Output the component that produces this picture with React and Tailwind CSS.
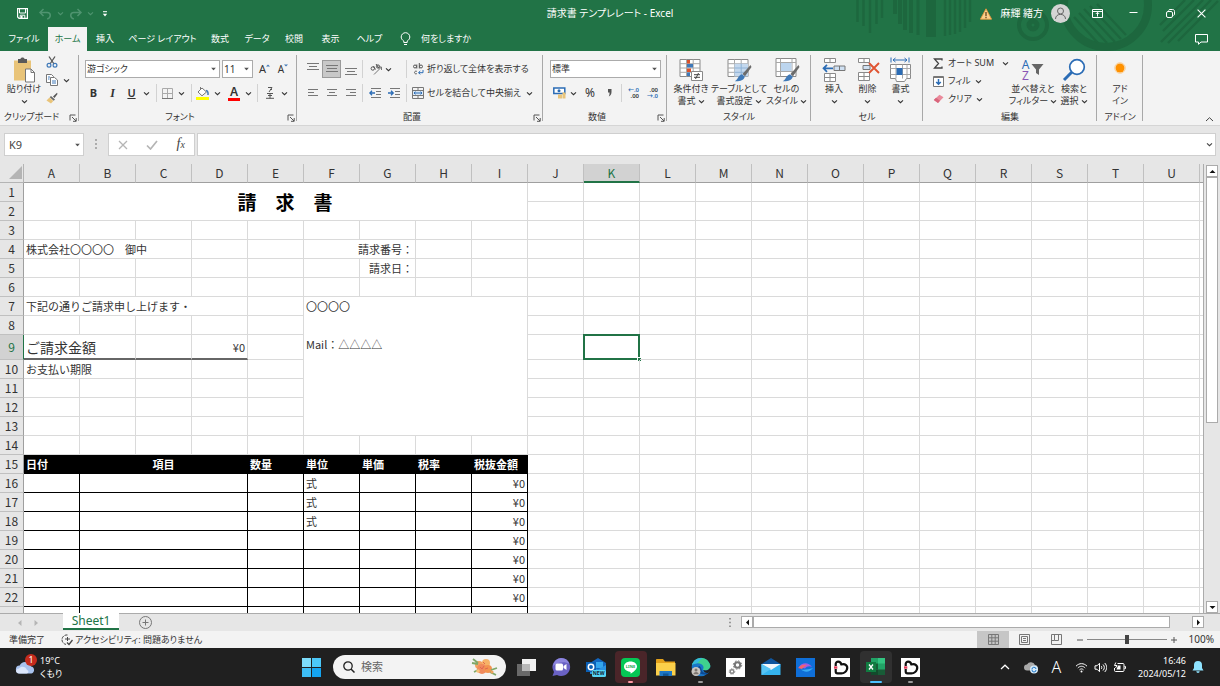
import React from "react";

/* ---------- shared pieces ---------- */

const uiFont = "font-['Noto_Sans','Noto_Sans_CJK_JP',sans-serif] [font-feature-settings:'palt']";
const sheetFont = "font-['Noto_Sans_CJK_JP',sans-serif] [font-feature-settings:normal]";

function Svg({ w, h, children, className = "", box }) {
  return (
    <svg
      width={w}
      height={h}
      viewBox={box || `0 0 ${w} ${h}`}
      fill="none"
      className={`shrink-0 ${className}`}
      aria-hidden="true"
    >
      {children}
    </svg>
  );
}

function Chevron({ className = "" }) {
  return (
    <Svg w={7} h={7} className={className}>
      <path d="M1 2.3l2.5 2.4L6 2.3" stroke="currentColor" strokeWidth="1.1" />
    </Svg>
  );
}

function Caret() {
  return (
    <Svg w={5} h={3} className="pointer-events-none absolute top-1/2 right-1 -translate-y-1/2">
      <path d="M0 0h5L2.5 3z" fill="#555" />
    </Svg>
  );
}

function Tool({ label, w, active, children }) {
  return (
    <button
      type="button"
      aria-label={label}
      title={label}
      className={`flex h-[18px] shrink-0 items-center justify-center ${w} ${
        active ? "border border-[#9a9a9a] bg-[#c8c8c8]" : ""
      }`}
    >
      {children}
    </button>
  );
}

function More({ label, w }) {
  return (
    <Tool label={label} w={w}>
      <Chevron />
    </Tool>
  );
}

function Rule({ w }) {
  return (
    <span className={`flex h-[18px] shrink-0 justify-center ${w}`}>
      <span className="w-px bg-[#d2d2d2]" />
    </span>
  );
}

function Launcher() {
  return (
    <button type="button" aria-label="詳細設定" className="absolute right-[2px] bottom-[3px]">
      <Svg w={8} h={8}>
        <path d="M1 6.5V1h5.5M3 3l4 4M7.2 4v3.3H4" stroke="#555" />
      </Svg>
    </button>
  );
}

function Group({ title, w, launcher, children }) {
  return (
    <section
      aria-label={title}
      className={`relative flex h-full shrink-0 flex-col ${w} after:absolute after:top-1 after:right-0 after:bottom-1 after:w-px after:bg-[#a8a8a8]`}
    >
      <div className="flex-1">{children}</div>
      <div className={`h-4 text-center leading-4 ${launcher ? "pr-4" : ""}`}>{title}</div>
      {launcher && <Launcher />}
    </section>
  );
}

function BigButton({ icon, lines, more, w }) {
  return (
    <button type="button" className={`flex shrink-0 flex-col items-center pt-[5px] ${w}`}>
      <span className="flex h-[27px] items-center">{icon}</span>
      {lines.map((line, i) => (
        <span key={line} className="flex h-3 items-center gap-0.5 leading-3 whitespace-nowrap">
          {line}
          {more === "inline" && i === lines.length - 1 && <Chevron />}
        </span>
      ))}
      {more === "below" && (
        <span className="flex h-3 items-center">
          <Chevron />
        </span>
      )}
    </button>
  );
}

function Lines({ rows }) {
  return (
    <Svg w={12} h={12}>
      {rows.map(([x, y, len]) => (
        <path key={y} d={`M${x} ${y}h${len}`} stroke="#777" />
      ))}
    </Svg>
  );
}

/* ---------- title bar and tabs ---------- */

function HeaderArt() {
  return (
    <svg
      viewBox="0 0 366 51"
      className="pointer-events-none absolute top-0 right-0 h-full w-[366px]"
      fill="none"
      stroke="#1d673e"
      aria-hidden="true"
    >
      <g strokeWidth="2.4">
        <path d="M3.500 0v22M9.500 0v26M16 0v33M22.500 0v24M28 0v18" />
        <path d="M41 0v14M46 0v24M51 0v30M57 0v33" strokeWidth="4" />
        <path d="M64 0v35" strokeWidth="3" />
        <path d="M77 0v37" strokeWidth="10" />
        <path d="M91 0v36M96 0v35M101 0v34M106 0v32M111 0v28M116 0v22" />
      </g>
      <circle cx="179" cy="25" r="4" strokeWidth="5" />
      <circle cx="179" cy="25" r="14" strokeWidth="4" />
      <circle cx="252" cy="5" r="42" strokeWidth="8" />
      <g strokeWidth="2.4">
        <path d="M220 17l24 26M225 13l28 30M230 9l31 33M236 6l31 33M243 4l29 31" />
        <path d="M307 42L349 0M314 43L357 0M324 41L364 1M306 25L331 0M309 31L340 0" />
      </g>
    </svg>
  );
}

function TitleBar() {
  return (
    <div className="relative flex h-[27px] items-center text-white">
      <div className="flex flex-1 items-center">
        <button type="button" aria-label="上書き保存" className="ml-4 flex w-3 justify-center">
          <Svg w={11} h={11}>
            <path d="M.6.6h9.8v9.8H2L.6 9z" stroke="#fff" strokeWidth="1.2" />
            <path d="M2.5 1v4h6V1M3.2 10V7.2h4.6V10" stroke="#fff" />
            <path d="M4 8h1.6v2H4z" fill="#fff" />
          </Svg>
        </button>
        <button type="button" aria-label="元に戻す" className="ml-2.5 flex items-center gap-1 text-[#4f9470]">
          <Svg w={15} h={12}>
            <path d="M5.5 1L2 4.4 5.5 8M2 4.4h7.2c4 0 4.2 5.4 0 6.6" stroke="currentColor" strokeWidth="1.5" />
          </Svg>
          <Chevron />
        </button>
        <button type="button" aria-label="やり直し" className="ml-1 flex items-center gap-1 text-[#4f9470]">
          <Svg w={15} h={12}>
            <path d="M9.5 1L13 4.4 9.5 8M13 4.4H5.8c-4 0-4.2 5.4 0 6.6" stroke="currentColor" strokeWidth="1.5" />
          </Svg>
          <Chevron />
        </button>
        <button type="button" aria-label="クイック アクセス ツール バーのユーザー設定" className="ml-2 flex">
          <Svg w={6} h={6}>
            <path d="M1 .7h4" stroke="#fff" />
            <path d="M.8 2.8h4.4L3 5.4z" fill="#fff" />
          </Svg>
        </button>
      </div>
      <h1 className="text-[10px] whitespace-pre">請求書 テンプレレート - Excel</h1>
      <div className="flex flex-1 items-center justify-end">
        <Svg w={12} h={12}>
          <path d="M6 .8L11.6 11.2H.4z" fill="#fbd08c" stroke="#e8963c" strokeWidth=".9" />
          <path d="M6 4v4M6 8.8v1.4" stroke="#5d3a12" strokeWidth="1.2" />
        </Svg>
        <span className="ml-2 text-[10px]">麻輝 緒方</span>
        <button type="button" aria-label="アカウント" className="ml-2 flex">
          <Svg w={19} h={19}>
            <circle cx="9.5" cy="9.5" r="9.5" fill="#d4d4d4" />
            <circle cx="9.5" cy="7" r="3" stroke="#666" />
            <path d="M4.5 15c0-6.200 10-6.200 10 0" stroke="#666" />
          </Svg>
        </button>
        <button type="button" aria-label="リボンの表示オプション" className="flex w-[54px] justify-center">
          <Svg w={11} h={9}>
            <path d="M.5.5h10v8H.5zM.5 2.500h10M5.500 7.500v-4M3.800 5l1.700-1.700L7.200 5" stroke="#fff" />
          </Svg>
        </button>
        <button type="button" aria-label="最小化" className="flex w-[19px] justify-center">
          <Svg w={9} h={9}>
            <path d="M.5 3.500h8" stroke="#fff" />
          </Svg>
        </button>
        <button type="button" aria-label="元に戻す (縮小)" className="flex w-[54px] justify-center">
          <Svg w={9} h={9}>
            <rect x=".5" y="2.500" width="6" height="6" rx="1.500" stroke="#fff" />
            <path d="M2.500 1.500c.3-.7.800-1 1.500-1h2.500c1.300 0 2 .7 2 2V5c0 .7-.3 1.200-1 1.500" stroke="#fff" />
          </Svg>
        </button>
        <button type="button" aria-label="閉じる" className="mr-3.5 flex w-[9px] justify-center">
          <Svg w={9} h={9}>
            <path d="M.6.6l7.800 7.800M8.400.6L.6 8.400" stroke="#fff" strokeWidth="1.100" />
          </Svg>
        </button>
      </div>
    </div>
  );
}

const tabs = [
  ["ファイル", "w-12"],
  ["ホーム", "w-[39px]"],
  ["挿入", "w-9"],
  ["ページ レイアウト", "w-[79px]"],
  ["数式", "w-9"],
  ["データ", "w-[38px]"],
  ["校閲", "w-9"],
  ["表示", "w-[37px]"],
  ["ヘルプ", "w-[41px]"],
];

function Tabs() {
  return (
    <nav aria-label="リボン タブ" className="relative flex h-6 items-stretch text-[9px] text-white">
      {tabs.map(([name, w]) => (
        <button
          key={name}
          type="button"
          className={`shrink-0 whitespace-nowrap ${w} ${name === "ホーム" ? "bg-[#f3f3f3] text-[#217346]" : ""}`}
        >
          {name}
        </button>
      ))}
      <button type="button" className="ml-2.5 flex items-center gap-2.5">
        <Svg w={11} h={14}>
          <path
            d="M3.800 10.500V9C2.200 8 1.200 6.700 1.200 5a4.300 4.300 0 018.600 0c0 1.700-1 3-2.600 4v1.500zM4 12.500h3"
            stroke="#fff"
          />
        </Svg>
        何をしますか
      </button>
      <button type="button" aria-label="コメント" className="mr-3 ml-auto flex items-center">
        <Svg w={13} h={11}>
          <path d="M.5.5h12v7.500H6L3.500 10.300V8h-3z" stroke="#fff" />
        </Svg>
      </button>
    </nav>
  );
}

/* ---------- ribbon ---------- */

function GridIcon({ children }) {
  return (
    <Svg w={26} h={26}>
      <path d="M2 2.500h20v17H2z" fill="#fff" stroke="#8a8a8a" />
      <path d="M2 6.700h20M2 11h20M2 15.300h20M8.500 2.500v17M15.200 2.500v17" stroke="#a8a8a8" />
      {children}
    </Svg>
  );
}

function Brush() {
  return (
    <>
      <path d="M24.500 8L16.500 17l2.500 2.200L25.500 10z" fill="#6b6b6b" />
      <path d="M16 17.300l2.800 2.500c-1.300 4-5 4.700-10 4.500 3-1.300 3.400-6.300 7.200-7z" fill="#3f79b8" />
    </>
  );
}

function ClipboardGroup() {
  return (
    <Group title="クリップボード" w="w-[79px]" launcher>
      <div className="flex">
        <BigButton
          w="ml-1 w-10"
          lines={["貼り付け"]}
          more="below"
          icon={
            <Svg w={24} h={26}>
              <path d="M2 3.500h17v20H2z" fill="#e9c479" />
              <path d="M6 2h2.500c0-2 4-2 4 0H15v4H6z" fill="#595959" />
              <path d="M13.500 12h5.500l3.500 3.500v9.500h-9z" fill="#fff" stroke="#777" />
              <path d="M19 12v3.500h3.500" stroke="#777" />
            </Svg>
          }
        />
        <div className="flex flex-col pt-0.5">
          <Tool label="切り取り" w="w-4">
            <Svg w={12} h={12}>
              <path d="M3 .5l5 7.500M9 .5L4 8" stroke="#555" strokeWidth="1.300" />
              <circle cx="3" cy="9.300" r="1.900" stroke="#3f79b8" strokeWidth="1.200" />
              <circle cx="9" cy="9.300" r="1.900" stroke="#3f79b8" strokeWidth="1.200" />
            </Svg>
          </Tool>
          <div className="flex">
            <Tool label="コピー" w="w-4">
              <Svg w={12} h={12}>
                <path d="M.5.500h5l2 2V8.500h-7z" fill="#fff" stroke="#777" />
                <path d="M4.500 3.500h4l3 2.500v5.500h-7z" fill="#fff" stroke="#777" />
                <path d="M6 7h4M6 9h4M2 3h2M2 5h1.500" stroke="#3f79b8" />
              </Svg>
            </Tool>
            <More label="コピーのオプション" w="w-3" />
          </div>
          <Tool label="書式のコピー/貼り付け" w="w-4">
            <Svg w={12} h={12}>
              <path d="M11 .8L7 4.500l1.500 1.500 3-4z" fill="#555" />
              <path d="M5 4l4 3.500-1.300 1.300-4-3.500z" fill="#666" />
              <path d="M3.500 5.500L7.300 9 5 11.500.5 8.500z" fill="#e9c479" />
            </Svg>
          </Tool>
        </div>
      </div>
    </Group>
  );
}

function FontGroup() {
  return (
    <Group title="フォント" w="w-[218px]" launcher>
      <div className="flex items-center pt-[9px] pl-1.5">
        <div className="relative">
          <select
            aria-label="フォント"
            className="block h-[18px] w-[135px] appearance-none border border-[#ababab] bg-white px-px text-[9px] leading-4"
          >
            <option>游ゴシック</option>
          </select>
          <Caret />
        </div>
        <div className="relative ml-0.5">
          <select
            aria-label="フォント サイズ"
            className="block h-[18px] w-[31px] appearance-none border border-[#ababab] bg-white px-px text-[10px] leading-4"
          >
            <option>11</option>
          </select>
          <Caret />
        </div>
        <Tool label="フォント サイズの拡大" w="ml-0.5 w-[19px]">
          <span className="text-[11px]">A</span>
          <Svg w={4} h={10}>
            <path d="M0 2.500L2 .5l2 2z" fill="#3f79b8" />
          </Svg>
        </Tool>
        <Tool label="フォント サイズの縮小" w="w-[18px]">
          <span className="text-[10px]">A</span>
          <Svg w={4} h={10}>
            <path d="M0 .5h4l-2 2z" fill="#3f79b8" />
          </Svg>
        </Tool>
      </div>
      <div className="flex items-center pt-1.5 pl-1.5">
        <Tool label="太字" w="w-[17px]">
          <span className="text-[11px] font-bold">B</span>
        </Tool>
        <Tool label="斜体" w="w-[21px]">
          <span className="font-['Liberation_Serif',serif] text-[12px] font-bold italic">I</span>
        </Tool>
        <Tool label="下線" w="w-[17px]">
          <span className="text-[11px] font-semibold underline">U</span>
        </Tool>
        <More label="下線のオプション" w="w-3" />
        <Rule w="w-2" />
        <Tool label="罫線" w="w-[15px]">
          <Svg w={11} h={11}>
            <path d="M.5.5h10v10H.5zM5.500.5v10M.5 5.500h10" stroke="#aaa" />
            <path d="M0 10.500h11" stroke="#777" />
          </Svg>
        </Tool>
        <More label="罫線のオプション" w="w-[13px]" />
        <Rule w="w-[7px]" />
        <Tool label="塗りつぶしの色" w="w-4">
          <Svg w={14} h={14}>
            <path d="M6 2l4.500 4L6 9.800 2 6z" fill="#fff" stroke="#777" />
            <path d="M4.500 4V1" stroke="#777" />
            <path d="M10 4.500c1.500.3 2.300 2 2 4.500" stroke="#3f79b8" strokeWidth="1.500" />
            <path d="M0 11h13v3H0z" fill="#ff0" />
          </Svg>
        </Tool>
        <More label="塗りつぶしのオプション" w="w-[13px]" />
        <Tool label="フォントの色" w="w-5">
          <span className="border-b-[3px] border-[#f00] px-0.5 text-[12px] leading-[12px] font-semibold">A</span>
        </Tool>
        <More label="フォントの色のオプション" w="w-[9px]" />
        <Rule w="w-[9px]" />
        <Tool label="ふりがな" w="w-[15px]">
          <Svg w={8} h={12}>
            <path d="M2 .5h4L3 5M4 2.500h2M1 6.500h6M2 8.500h4M4 6.500v5M0 11.300h8" stroke="#555" />
          </Svg>
        </Tool>
        <More label="ふりがなのオプション" w="w-3.5" />
      </div>
    </Group>
  );
}

function IndentIcon({ out }) {
  return (
    <Svg w={12} h={12}>
      <path d="M2 1.500h10M7 4.500h5M7 7.500h5M2 10.500h10" stroke="#777" />
      {out ? (
        <path d="M6 6H1M3 3.800L.8 6 3 8.200" stroke="#2b6cb5" strokeWidth="1.300" />
      ) : (
        <path d="M0 6h5M3 3.800L5.200 6 3 8.200" stroke="#2b6cb5" strokeWidth="1.300" />
      )}
    </Svg>
  );
}

function AlignGroup() {
  return (
    <Group title="配置" w="w-[246px]" launcher>
      <div className="flex items-center pt-[9px] pl-1.5">
        <Tool label="上揃え" w="w-[19px]">
          <Lines rows={[[0, 0.5, 12], [2, 3.5, 8], [0, 6.5, 12]]} />
        </Tool>
        <Tool label="上下中央揃え" w="w-[19px]" active>
          <Lines rows={[[0, 2.5, 12], [1, 5.5, 10], [0, 8.5, 12]]} />
        </Tool>
        <Tool label="下揃え" w="w-[19px]">
          <Lines rows={[[0, 5.5, 12], [2, 8.5, 8], [0, 11.5, 12]]} />
        </Tool>
        <Rule w="w-[5px]" />
        <Tool label="方向" w="ml-1 w-[15px]">
          <Svg w={13} h={12}>
            <path d="M4 11.500L11.500 4M8.500 4h3v3" stroke="#777" />
            <circle cx="2.800" cy="5.500" r="1.700" stroke="#555" />
            <path d="M3.500 3l2 3.500M6 1l3 4.500" stroke="#555" />
            <circle cx="8" cy="3.500" r="1.600" stroke="#555" />
          </Svg>
        </Tool>
        <More label="方向のオプション" w="w-[9px]" />
        <span className="w-2.5" />
        <Rule w="w-[7px]" />
        <button type="button" className="ml-[3px] flex items-center gap-[3px] whitespace-nowrap">
          <Svg w={11} h={12}>
            <circle cx="2" cy="3.500" r="1.500" stroke="#555" />
            <path d="M3.800 1.500v4M6.300 0v5.500" stroke="#555" />
            <circle cx="8" cy="3.500" r="1.500" stroke="#555" />
            <path d="M3.800 8.300c-3-1-3 3.400 0 2.400" stroke="#555" />
            <path d="M10 7v2.700H5.800M7.300 8L5.500 9.700l1.800 1.600" stroke="#2b6cb5" />
          </Svg>
          折り返して全体を表示する
        </button>
      </div>
      <div className="flex items-center pt-1.5 pl-1.5">
        <Tool label="左揃え" w="w-[19px]">
          <Lines rows={[[1, 2.5, 10], [1, 5.5, 6], [1, 8.5, 10]]} />
        </Tool>
        <Tool label="中央揃え" w="w-[19px]">
          <Lines rows={[[1, 2.5, 10], [3, 5.5, 6], [1, 8.5, 10]]} />
        </Tool>
        <Tool label="右揃え" w="w-[19px]">
          <Lines rows={[[1, 2.5, 10], [5, 5.5, 6], [1, 8.5, 10]]} />
        </Tool>
        <Rule w="w-[5px]" />
        <Tool label="インデントを減らす" w="w-[19px]">
          <IndentIcon out />
        </Tool>
        <Tool label="インデントを増やす" w="w-[19px]">
          <IndentIcon />
        </Tool>
        <Rule w="w-[7px]" />
        <button type="button" className="ml-0.5 flex flex-1 items-center gap-[3px] pr-2.5 whitespace-nowrap">
          <Svg w={12} h={12}>
            <path d="M.5.5h11v11H.5zM.5 3.500h11M.5 8.500h11M6 .5v3M6 8.500v3" stroke="#777" />
            <path d="M1 4h10v4H1z" fill="#dce9f6" />
            <path d="M2 6h8M3.500 4.700L2 6l1.500 1.300M8.500 4.700L10 6 8.500 7.300" stroke="#2b6cb5" />
          </Svg>
          <span className="flex-1 text-left">セルを結合して中央揃え</span>
          <Chevron />
        </button>
      </div>
    </Group>
  );
}

function NumberGroup() {
  return (
    <Group title="数値" w="w-[124px]" launcher>
      <div className="pt-[9px] pl-[7px]">
        <div className="relative w-[111px]">
          <select
            aria-label="表示形式"
            className="block h-[18px] w-full appearance-none border border-[#ababab] bg-white px-px text-[9px] leading-4"
          >
            <option>標準</option>
          </select>
          <Caret />
        </div>
      </div>
      <div className="flex items-center pt-1.5 pl-2">
        <Tool label="通貨表示形式" w="w-4">
          <Svg w={13} h={12}>
            <path d="M.8 1h11v5.500h-11z" fill="#fff" stroke="#2b6cb5" strokeWidth="1.500" />
            <circle cx="6" cy="3.800" r="1.500" fill="#2b6cb5" />
            <path d="M5 7.500h4v4H5zM9.500 5.500h3v6h-3z" fill="#e9c479" />
          </Svg>
        </Tool>
        <More label="通貨のオプション" w="w-[13px]" />
        <Tool label="パーセント スタイル" w="w-5">
          <span className="text-[12px]">%</span>
        </Tool>
        <Tool label="桁区切りスタイル" w="w-[18px]">
          <Svg w={5} h={8}>
            <path d="M1 0h3.500v3c0 2-1 3.500-2.700 4.500C2.500 6 2.500 5 2.500 3.500H1z" fill="#555" />
          </Svg>
        </Tool>
        <Rule w="w-1.5" />
        <Tool label="小数点以下の表示桁数を増やす" w="w-[19px]">
          <span className="flex flex-col text-right text-[6px] leading-[6px] font-semibold">
            <span className="text-[#2b6cb5]">←.0</span>
            <span>.00</span>
          </span>
        </Tool>
        <Tool label="小数点以下の表示桁数を減らす" w="w-[19px]">
          <span className="flex flex-col text-right text-[6px] leading-[6px] font-semibold">
            <span>.00</span>
            <span className="text-[#2b6cb5]">→.0</span>
          </span>
        </Tool>
      </div>
    </Group>
  );
}

function StyleGroup() {
  return (
    <Group title="スタイル" w="w-36">
      <div className="flex pl-0.5">
        <BigButton
          w="w-11"
          lines={["条件付き", "書式"]}
          more="inline"
          icon={
            <GridIcon>
              <path d="M9 3h3v3.500H9zM9 11.500h4V15H9z" fill="#d9532c" />
              <path d="M9 7h6v3.500H9zM9 15.500h3V19H9z" fill="#3f79b8" />
              <path d="M13.500 14.500h11v9h-11z" fill="#fff" stroke="#888" />
              <path d="M16 17.700h6M16 20.300h6M20.500 16l-3 6" stroke="#444" />
            </GridIcon>
          }
        />
        <BigButton
          w="w-[52px]"
          lines={["テーブルとして", "書式設定"]}
          more="inline"
          icon={
            <GridIcon>
              <path d="M8.500 6.700h13.500v12.800H8.500z" fill="#c3d8ee" />
              <path d="M8.500 11h13.500M8.500 15.300h13.500M15.200 6.700v12.800" stroke="#8fb2d6" />
              <Brush />
            </GridIcon>
          }
        />
        <BigButton
          w="w-[43px]"
          lines={["セルの", "スタイル"]}
          more="inline"
          icon={
            <Svg w={26} h={26}>
              <path d="M2 1.500h20v18H2z" fill="#fff" stroke="#8a8a8a" />
              <path d="M2 5.500h20M2 14.500h20M6.500 1.500v18M18 1.500v18" stroke="#a8a8a8" />
              <path d="M7 6h10.500v8H7z" fill="#bcd5ee" />
              <Brush />
            </Svg>
          }
        />
      </div>
    </Group>
  );
}

function CellGroup() {
  return (
    <Group title="セル" w="w-28">
      <div className="flex pl-1.5">
        <BigButton
          w="w-[34px]"
          lines={["挿入"]}
          more="below"
          icon={
            <Svg w={24} h={26}>
              <path d="M2.500 1.500h11v4h-11zM8 1.500v4M2.500 16.500h11v8h-11zM2.500 20.500h11M8 16.500v8" fill="#fff" stroke="#8a8a8a" />
              <path d="M12 9h11v4.500H12zM17.500 9v4.500" fill="#cfe0f2" stroke="#777" />
              <path d="M11 11.300H1.500M5 7.800l-3.500 3.500L5 14.800" stroke="#2b6cb5" strokeWidth="1.700" />
            </Svg>
          }
        />
        <BigButton
          w="w-[33px]"
          lines={["削除"]}
          more="below"
          icon={
            <Svg w={24} h={26}>
              <path d="M2.500 1.500h11v4h-11zM8 1.500v4M2.500 15.500h11v8h-11zM2.500 19.500h11M8 15.500v8" fill="#fff" stroke="#8a8a8a" />
              <path d="M7 8.500h7v4H7z" fill="#cfe0f2" stroke="#777" />
              <path d="M13 6l10 10M23 6L13 16" stroke="#e05432" strokeWidth="1.900" />
            </Svg>
          }
        />
        <BigButton
          w="w-[33px]"
          lines={["書式"]}
          more="below"
          icon={
            <Svg w={24} h={26}>
              <path d="M2 .5v5M20 .5v5M4 3h14M6.500 1L4 3l2.500 2M15.500 1L18 3l-2.500 2" stroke="#2b6cb5" />
              <path d="M1.500 7.500h20v14h-4l-2 3h-8l-1-3h-5z" fill="#fff" stroke="#8a8a8a" />
              <path d="M1.500 11.500h20M1.500 17.500h20M7 7.500v14M13.500 7.500v14M18 7.500v14" stroke="#a8a8a8" />
              <path d="M7.500 11h6v7h-6z" fill="#2b6cb5" />
            </Svg>
          }
        />
      </div>
    </Group>
  );
}

function EditRow({ icon, label, gap }) {
  return (
    <button type="button" className="flex h-[18px] items-center whitespace-nowrap">
      <span className="mr-1 flex w-3 justify-center">{icon}</span>
      {label}
      <Chevron className={gap} />
    </button>
  );
}

function EditGroup() {
  return (
    <Group title="編集" w="w-[174px]">
      <div className="flex">
        <div className="flex w-[87px] flex-col pt-[3px] pl-[9px]">
          <EditRow
            gap="ml-2"
            label="オート SUM"
            icon={
              <Svg w={10} h={11}>
                <path d="M9 2.500V1H1.500l4 4.500-4 4.500H9V8.500" stroke="#444" strokeWidth="1.300" />
              </Svg>
            }
          />
          <EditRow
            gap="ml-1"
            label="フィル"
            icon={
              <Svg w={11} h={11}>
                <path d="M.5.5h10v10H.5z" fill="#fff" stroke="#777" />
                <path d="M.5 1.500h10" stroke="#777" />
                <path d="M5.500 3v5M3.200 6l2.300 2.300L7.800 6" stroke="#2b6cb5" strokeWidth="1.500" />
              </Svg>
            }
          />
          <EditRow
            gap="ml-1"
            label="クリア"
            icon={
              <Svg w={11} h={10}>
                <path d="M6.500.8l4 2.500L5 9 .8 6z" fill="#ea8a9b" />
                <path d="M3 3.800l4 3L5 9 .8 6z" fill="#d9657c" />
              </Svg>
            }
          />
        </div>
        <BigButton
          w="w-[46px]"
          lines={["並べ替えと", "フィルター"]}
          more="inline"
          icon={
            <span className="flex items-center">
              <span className="flex flex-col text-[12px] leading-[11px]">
                <span className="text-[#2b6cb5]">A</span>
                <span className="text-[#8a55b5]">Z</span>
              </span>
              <Svg w={13} h={13} className="ml-0.5">
                <path d="M.5 1h12L8 6.500V12L5 10V6.500z" fill="#666" />
              </Svg>
            </span>
          }
        />
        <BigButton
          w="w-[36px]"
          lines={["検索と", "選択"]}
          more="inline"
          icon={
            <Svg w={24} h={24}>
              <circle cx="15" cy="9" r="7.300" fill="#fff" stroke="#2b6cb5" strokeWidth="1.700" />
              <path d="M9.700 14.300L2 22" stroke="#2b6cb5" strokeWidth="3" />
            </Svg>
          }
        />
      </div>
    </Group>
  );
}

function Ribbon() {
  return (
    <div className="relative flex h-[75px] shrink-0 border-b border-[#d5d5d5] bg-[#f3f3f3] text-[9px] text-[#333]">
      <ClipboardGroup />
      <FontGroup />
      <AlignGroup />
      <NumberGroup />
      <StyleGroup />
      <CellGroup />
      <EditGroup />
      <Group title="アドイン" w="w-[46px]">
        <BigButton
          w="w-full"
          lines={["アド", "イン"]}
          icon={
            <Svg w={12} h={12} className="-mt-1">
              <circle cx="6" cy="6" r="4.500" fill="#ff9100" />
              <circle cx="6" cy="6" r="5.300" stroke="#ffb95e" strokeOpacity=".6" />
            </Svg>
          }
        />
      </Group>
      <button type="button" aria-label="リボンを折りたたむ" className="absolute right-1.5 bottom-0.5">
        <Svg w={9} h={7}>
          <path d="M1 5l3.500-3.300L8 5" stroke="#444" />
        </Svg>
      </button>
    </div>
  );
}

/* ---------- formula bar ---------- */

function FormulaBar() {
  return (
    <div className="flex h-[38px] shrink-0 items-start bg-[#e6e6e6] px-1 pt-[7px] text-[#444]">
      <div className="relative">
        <input
          aria-label="名前ボックス"
          defaultValue="K9"
          className="block h-[23px] w-20 border border-[#cfcfcf] bg-white px-1 text-[11px]"
        />
        <Caret />
      </div>
      <span className="flex h-[23px] w-6 items-center justify-center">
        <Svg w={2} h={11}>
          <path d="M0 1h2M0 5h2M0 9h2" stroke="#999" strokeWidth="1.500" />
        </Svg>
      </span>
      <div className="flex h-[23px] w-[87px] items-center justify-around border border-[#cfcfcf] bg-white">
        <button type="button" aria-label="キャンセル">
          <Svg w={10} h={10}>
            <path d="M1 1l8 8M9 1L1 9" stroke="#b5b5b5" strokeWidth="1.300" />
          </Svg>
        </button>
        <button type="button" aria-label="入力">
          <Svg w={12} h={10}>
            <path d="M1 5.500L4.500 9 11 1" stroke="#b5b5b5" strokeWidth="1.700" />
          </Svg>
        </button>
        <button
          type="button"
          aria-label="関数の挿入"
          className="font-['Liberation_Serif',serif] text-[14px] leading-4 italic"
        >
          f<span className="text-[10px]">x</span>
        </button>
      </div>
      <div className="relative ml-0.5 flex-1">
        <input
          aria-label="数式バー"
          className="block h-[23px] w-full border border-[#cfcfcf] bg-white px-1 text-[11px]"
        />
        <Chevron className="pointer-events-none absolute top-2 right-[3px]" />
      </div>
    </div>
  );
}

/* ---------- worksheet ---------- */

const letters = "ABCDEFGHIJKLMNOPQRSTU".split("");
const blank = (n) => Array.from({ length: n }, () => ({}));
const thick = "border-b-2 border-b-[#666]";
const ink = "border-r-black border-b-black";
const head = "bg-black text-white font-bold border-black";

const itemRow = (unit, amount) => [
  { cls: ink },
  { span: 3, cls: ink },
  { cls: ink },
  { text: unit, cls: ink },
  { cls: ink },
  { cls: ink },
  { text: amount, cls: `${ink} text-right` },
];

const rows = [
  {
    n: 1,
    cells: [
      { span: 9, rowSpan: 2, text: "　請　求　書", cls: "text-center text-[19px] font-bold text-black" },
    ],
  },
  { n: 2, cells: [] },
  { n: 3, cells: blank(9) },
  {
    n: 4,
    cells: [
      { span: 3, text: "株式会社〇〇〇〇　御中" },
      ...blank(2),
      { span: 2, text: "請求番号：", cls: "text-right" },
      ...blank(2),
    ],
  },
  { n: 5, cells: [...blank(6), { text: "請求日：", cls: "text-right" }, ...blank(2)] },
  { n: 6, cells: blank(9) },
  {
    n: 7,
    cells: [
      { span: 4, text: "下記の通りご請求申し上げます・" },
      {},
      { span: 4, rowSpan: 7, text: "〇〇〇〇\n\nMail：△△△△", cls: "whitespace-pre align-top leading-[19px]" },
    ],
  },
  { n: 8, cells: blank(5) },
  {
    n: 9,
    tall: true,
    cells: [
      { span: 2, text: "ご請求金額", cls: `${thick} text-[14px]` },
      { cls: thick },
      { text: "¥0", cls: `${thick} text-right` },
      {},
    ],
  },
  { n: 10, cells: [{ span: 2, text: "お支払い期限" }, ...blank(3)] },
  { n: 11, cells: blank(5) },
  { n: 12, cells: blank(5) },
  { n: 13, cells: blank(5) },
  { n: 14, cells: blank(9) },
  {
    n: 15,
    cells: [
      { text: "日付", cls: head },
      { span: 3, text: "項目", cls: `${head} text-center` },
      { text: "数量", cls: head },
      { text: "単位", cls: head },
      { text: "単価", cls: head },
      { text: "税率", cls: head },
      { text: "税抜金額", cls: head },
    ],
  },
  { n: 16, cells: itemRow("式", "¥0") },
  { n: 17, cells: itemRow("式", "¥0") },
  { n: 18, cells: itemRow("式", "¥0") },
  { n: 19, cells: itemRow("", "¥0") },
  { n: 20, cells: itemRow("", "¥0") },
  { n: 21, cells: itemRow("", "¥0") },
  { n: 22, cells: itemRow("", "¥0") },
  { n: "", cells: itemRow("", "") },
];

function Sheet() {
  return (
    <div className={`min-w-0 flex-1 overflow-hidden border-r border-[#ababab] bg-white ${sheetFont}`}>
      <table className="w-full table-fixed border-separate border-spacing-0 text-[11px] text-[#333]">
        <colgroup>
          <col className="w-6" />
          {letters.map((l) => (
            <col key={l} className="w-14" />
          ))}
          <col />
        </colgroup>
        <thead>
          <tr className="h-[19px] bg-[#e6e6e6]">
            <td className="border-r border-b border-[#b4b4b4] p-0">
              <Svg w={14} h={14} className="ml-auto">
                <path d="M13 0v13H0z" fill="#b4b4b4" />
              </Svg>
            </td>
            {letters.map((l) => (
              <th
                key={l}
                scope="col"
                className={`border-r border-[#c0c0c0] p-0 align-top text-[12px] leading-[17px] font-normal ${
                  l === "K" ? "border-b-2 border-b-[#217346] bg-[#d2d2d2] text-[#217346]" : "border-b border-b-[#9f9f9f]"
                }`}
              >
                {l}
              </th>
            ))}
            <td className="border-b border-[#9f9f9f] p-0" />
          </tr>
        </thead>
        <tbody>
          {rows.map((row, i) => (
            <tr key={i} className={row.tall ? "h-[25px]" : "h-[19px]"}>
              <th
                scope="row"
                className={`border-r border-b border-b-[#c0c0c0] p-0 text-center text-[12px] leading-[18px] font-normal ${
                  row.tall
                    ? "border-r-[#217346] bg-[#d2d2d2] text-[#217346]"
                    : "border-r-[#9f9f9f] bg-[#e6e6e6]"
                }`}
              >
                {row.n}
              </th>
              {row.cells.map((c, j) => (
                <td
                  key={j}
                  colSpan={c.span}
                  rowSpan={c.rowSpan}
                  className={`border-r border-b border-[#dadada] px-0.5 py-0 leading-[18px] whitespace-pre ${c.cls || ""}`}
                >
                  {c.text}
                </td>
              ))}
              {letters.slice(9).map((l) => (
                <td key={l} className="relative border-r border-b border-[#dadada] p-0">
                  {row.n === 9 && l === "K" && (
                    <span className="absolute -inset-px border-2 border-[#217346]">
                      <span className="absolute -right-[3px] -bottom-[3px] size-1 border-t border-l border-white bg-[#217346]" />
                    </span>
                  )}
                </td>
              ))}
              <td className="border-b border-[#dadada] p-0" />
            </tr>
          ))}
        </tbody>
      </table>
    </div>
  );
}

function ArrowButton({ label, d, className = "" }) {
  return (
    <button
      type="button"
      aria-label={label}
      className={`flex size-3 shrink-0 items-center justify-center border border-[#ababab] bg-white ${className}`}
    >
      <Svg w={7} h={7}>
        <path d={d} fill="#111" />
      </Svg>
    </button>
  );
}

function VerticalScroll() {
  return (
    <div className="flex w-4 shrink-0 flex-col items-center bg-[#e6e6e6] pt-px">
      <ArrowButton label="上へスクロール" d="M.5 5h6l-3-3z" />
      <div className="flex w-3 flex-1 flex-col">
        <div className="h-[58%] border border-[#ababab] bg-white" />
      </div>
      <ArrowButton label="下へスクロール" d="M.5 2h6l-3 3z" />
    </div>
  );
}

/* ---------- sheet tabs and status bar ---------- */

function SheetTabs() {
  return (
    <div className="flex h-[18px] shrink-0 items-start border-t border-[#ababab] bg-[#e6e6e6] pr-4">
      <div className="flex h-[17px] w-[63px] items-center justify-center gap-3 pr-2 text-[#b5b5b5]">
        <button type="button" aria-label="前のシート">
          <Svg w={4} h={6}>
            <path d="M3.500 0v6L0 3z" fill="currentColor" />
          </Svg>
        </button>
        <button type="button" aria-label="次のシート">
          <Svg w={4} h={6}>
            <path d="M.5 0v6L4 3z" fill="currentColor" />
          </Svg>
        </button>
      </div>
      <button
        type="button"
        className="-mt-px h-[17px] w-14 border-b-2 border-[#217346] bg-white text-[12px] leading-[14px] text-[#217346]"
      >
        Sheet1
      </button>
      <button type="button" aria-label="新しいシート" className="mt-0.5 ml-5">
        <Svg w={13} h={13}>
          <circle cx="6.500" cy="6.500" r="6" stroke="#777" />
          <path d="M3.500 6.500h6M6.500 3.500v6" stroke="#777" />
        </Svg>
      </button>
      <span className="mt-1 ml-auto flex w-[22px] justify-center">
        <Svg w={2} h={9}>
          <path d="M0 .8h2M0 4.500h2M0 8.200h2" stroke="#999" strokeWidth="1.500" />
        </Svg>
      </span>
      <div className="mt-0.5 flex w-[463px] items-center">
        <ArrowButton label="左へスクロール" d="M5 .5v6l-3-3z" />
        <div className="flex h-3 flex-1">
          <div className="w-[95%] border border-[#ababab] bg-white" />
        </div>
        <ArrowButton label="右へスクロール" d="M2 .5v6l3-3z" />
      </div>
    </div>
  );
}

function StatusBar() {
  return (
    <div className="flex h-[17px] shrink-0 items-center bg-[#f3f3f3] pr-1.5 pl-[9px] text-[9px] text-[#333]">
      <span>準備完了</span>
      <button type="button" className="ml-4 flex items-center gap-0.5">
        <Svg w={12} h={12}>
          <path d="M6.500 1A4.600 4.600 0 105 10.400" stroke="#444" strokeDasharray="3 1" />
          <path d="M4 5h5M6.500 3v4" stroke="#444" />
          <path d="M6 8.500L8 10.500l3.500-4.500" stroke="#444" strokeWidth="1.300" />
        </Svg>
        アクセシビリティ: 問題ありません
      </button>
      <div className="ml-auto flex h-full items-center">
        <button type="button" aria-label="標準" className="flex h-full w-8 items-center justify-center bg-[#c6c6c6]">
          <Svg w={11} h={11}>
            <path d="M.5.5h10v10H.5zM.5 3.800h10M.5 7.200h10M3.800.5v10M7.200.5v10" stroke="#777" />
          </Svg>
        </button>
        <button type="button" aria-label="ページ レイアウト" className="flex h-full w-[31px] items-center justify-center">
          <Svg w={11} h={11}>
            <path d="M.5.5h10v10H.5zM2.500 2.500h6v6h-6zM4 4.500h3M4 6.500h3" stroke="#777" />
          </Svg>
        </button>
        <button type="button" aria-label="改ページ プレビュー" className="flex h-full w-8 items-center justify-center">
          <Svg w={11} h={11}>
            <path d="M.5.5h10v10H.5zM3.500.5v6h4v-6M.5 6.500h3" stroke="#777" />
          </Svg>
        </button>
        <button type="button" aria-label="縮小" className="ml-1 flex">
          <Svg w={8} h={8}>
            <path d="M1 4h6" stroke="#555" />
          </Svg>
        </button>
        <input
          type="range"
          aria-label="ズーム"
          min="0"
          max="200"
          defaultValue="100"
          className="mx-[3px] h-3 w-20 appearance-none bg-transparent [&::-webkit-slider-runnable-track]:h-px [&::-webkit-slider-runnable-track]:bg-[#888] [&::-webkit-slider-thumb]:-mt-1 [&::-webkit-slider-thumb]:h-[9px] [&::-webkit-slider-thumb]:w-1 [&::-webkit-slider-thumb]:appearance-none [&::-webkit-slider-thumb]:bg-[#444]"
        />
        <button type="button" aria-label="拡大" className="flex">
          <Svg w={8} h={8}>
            <path d="M1 4h6M4 1v6" stroke="#555" />
          </Svg>
        </button>
        <span className="w-9 text-right text-[10px]">100%</span>
      </div>
    </div>
  );
}

/* ---------- taskbar ---------- */

function HeartIcon() {
  return (
    <Svg w={19} h={19}>
      <path d="M0 0h19v19H0z" fill="#fff" />
      <path
        d="M4.700 8V6c0-3 4.800-3.300 5.600.5 3.700-1.300 7 1.500 5.600 5-.9 2.500-3 3.800-5.500 3.900H6.500c-1.200 0-1.800-.7-1.800-1.800V11"
        stroke="#111"
        strokeWidth="2.200"
        strokeLinejoin="round"
      />
      <path d="M3 8.300h3.300v2.400H3z" fill="#e5395a" />
    </Svg>
  );
}

const apps = [
  {
    name: "タスク ビュー",
    icon: (
      <Svg w={20} h={19}>
        <path d="M6 1h14v12H6z" fill="#f2f2f2" />
        <path d="M1 6h13v12H1z" fill="#777" fillOpacity=".85" />
        <path d="M6 6h8v7H6z" fill="#b9b9b9" />
      </Svg>
    ),
  },
  {
    name: "チャット",
    icon: (
      <Svg w={20} h={20}>
        <path d="M10 1a9 9 0 11-4 17l-4.500 1L3 15A9 9 0 0110 1z" fill="#6a62c4" />
        <path d="M10 1a9 9 0 018.500 6C14 4 6 5 2 9a9 9 0 018-8z" fill="#8d86de" />
        <rect x="4.500" y="6.500" width="7.500" height="7" rx="1.500" fill="#fff" />
        <path d="M12.500 9L15.500 7v6l-3-2z" fill="#fff" />
      </Svg>
    ),
  },
  {
    name: "Outlook",
    icon: (
      <span className="relative flex">
        <Svg w={20} h={20}>
          <path d="M4 6l8-5 8 5v11H4z" fill="#1267c0" />
          <path d="M6 5h11v6H6z" fill="#33a6ee" />
          <path d="M4 8l8 4.500L20 8v9H4z" fill="#2a94e4" />
          <path d="M0 5h10v10H0z" fill="#0a5fb4" />
          <circle cx="5" cy="10" r="2.700" stroke="#fff" strokeWidth="1.500" />
          <rect x="6" y="13" width="14" height="7" rx="1.500" fill="#55d6f5" />
        </Svg>
        <span className="absolute right-px bottom-0 text-[5px] leading-[7px] font-bold text-[#123]">NEW</span>
      </span>
    ),
  },
  {
    name: "LINE",
    tile: "bg-[#4a2529]",
    mark: "w-[5px] bg-[#ff9aa5]",
    icon: (
      <span className="relative flex items-center justify-center">
        <Svg w={19} h={19}>
          <rect width="19" height="19" rx="4" fill="#06c755" />
          <path d="M9.500 3.500c3.800 0 6.500 2.300 6.500 5.100 0 3-4.200 5.900-6.500 7.200.2-1.300.2-2-.7-2.100C5.500 13.300 3 11.300 3 8.600c0-2.800 2.700-5.100 6.500-5.100z" fill="#fff" />
        </Svg>
        <span className="absolute top-[5px] text-[4px] leading-[7px] font-bold text-[#06a548]">LINE</span>
      </span>
    ),
  },
  {
    name: "エクスプローラー",
    icon: (
      <Svg w={20} h={19}>
        <path d="M0 2c0-.6.400-1 1-1h6l2 2.500h10v5H0z" fill="#e3a11a" />
        <path d="M0 5h19.500v12.500H0z" fill="#fbd04a" />
        <path d="M3.500 13h12.500v5H3.500z" fill="#1e77c4" />
        <path d="M7 15.500h5.500V18H7z" fill="#0f5696" />
      </Svg>
    ),
  },
  {
    name: "Edge",
    mark: "w-[5px] bg-[#9a9a9a]",
    icon: (
      <Svg w={20} h={20}>
        <circle cx="10" cy="10" r="9.300" fill="#1976c8" />
        <path d="M1 8C3-1 17-2 19.300 8.500c.3 4-4 5.500-7 4.500-1-.5.500-1.500.2-3C12 6 5 5 1 8z" fill="#3fd18e" />
        <path d="M1 8c2-6 8-7.500 11-6.500C8 2 8.500 6 5 6.500 3.500 6.700 2 7 1 8z" fill="#35b8e0" />
        <path d="M8 9c-3 3.500 0 9 6 8.500 2-.2 3-1 4-2-3 1-7 .5-7.500-3C10 10.500 9 9 8 9z" fill="#0c4a94" />
        <path d="M12.300 13c3 1.200 6.500-.2 7-3.500l.5 4-3 2.500c-2 .3-4-.8-4.500-3z" fill="#202020" />
        <circle cx="5" cy="14.500" r="4.500" fill="#c9c5c0" />
        <circle cx="5" cy="13" r="1.500" fill="#7b756f" />
        <path d="M2.300 17.300c.5-3 5-3 5.400 0z" fill="#7b756f" />
      </Svg>
    ),
  },
  {
    name: "設定ツール",
    icon: (
      <Svg w={19} h={19}>
        <path d="M0 0h19v19H0z" fill="#fff" />
        <circle cx="11.500" cy="7" r="2.700" stroke="#777" strokeWidth="2" />
        <circle cx="11.500" cy="7" r="4.200" stroke="#777" strokeDasharray="1.700 1.600" />
        <circle cx="6" cy="13.500" r="1.800" stroke="#888" strokeWidth="1.400" />
        <circle cx="6" cy="13.500" r="2.800" stroke="#888" strokeDasharray="1.200 1.200" />
      </Svg>
    ),
  },
  {
    name: "メール",
    icon: (
      <Svg w={20} h={20}>
        <path d="M.5 7L10 1l9.500 6v3H.5z" fill="#0f559d" />
        <path d="M.5 7h19v11H.5z" fill="#35b4ee" />
        <path d="M.5 7h19L10 13z" fill="#f3f7fa" />
        <path d="M.5 7v11L10 12z" fill="#57c4f4" />
      </Svg>
    ),
  },
  {
    name: "ペイント",
    icon: (
      <Svg w={19} h={19}>
        <path d="M0 0h19v19H0z" fill="#0f6fd8" />
        <path d="M3 9c2-4 9-6 13 0-3-1.500-5-.5-7 1.500z" fill="#a05be0" />
        <path d="M2 10c2-3 6-4 9-3-2 .8-3.500 2.500-5 4z" fill="#f0636e" />
        <path d="M5 11.500c4 .5 7 0 12-1.500-3 4-8 5-12 1.500z" fill="#36a9f5" />
      </Svg>
    ),
  },
  { name: "ハート A", icon: <HeartIcon /> },
  {
    name: "Excel",
    tile: "bg-[#303030]",
    mark: "w-3 bg-[#4cc2ff]",
    icon: (
      <span className="relative flex">
        <Svg w={19} h={18}>
          <path d="M5 0h14v17H5z" fill="#21a366" />
          <path d="M12 0h7v5.500h-7z" fill="#33c481" />
          <path d="M5 5.500h7v6H5zM12 11.500h7V17h-7z" fill="#185c37" />
          <path d="M5 11.500h7V17H5z" fill="#134a2c" />
          <path d="M0 4h10v10H0z" fill="#107c41" />
          <path d="M3 6.500l4 5M7 6.500l-4 5" stroke="#fff" strokeWidth="1.300" />
        </Svg>
      </span>
    ),
  },
  { name: "ハート B", mark: "w-[5px] bg-[#9a9a9a]", icon: <HeartIcon /> },
];

function Taskbar() {
  return (
    <footer className="flex h-[38px] shrink-0 items-center bg-[#202020] text-[9px] text-white">
      <div className="flex flex-1 items-center pl-2.5">
        <button type="button" className="flex items-center gap-[3px] pl-[5px] text-left">
          <span className="relative flex">
            <Svg w={22} h={20} className="mt-1">
              <path d="M5 14.500a4 4 0 01-.3-8A6 6 0 0116 7.500a3.600 3.600 0 01.5 7z" fill="#a9c3ee" />
              <path d="M4 14.500c-4-.5-3.500-5 0-5 2-3 7-2 8 1.500 2 .5 2 3.500-.5 3.500z" fill="#dce7fb" />
            </Svg>
            <span className="absolute -top-px right-0 size-3 rounded-full bg-[#c42b1c] text-center text-[9px] leading-3">
              1
            </span>
          </span>
          <span className="flex flex-col leading-[13px]">
            <span>19°C</span>
            <span>くもり</span>
          </span>
        </button>
      </div>
      <div className="flex items-center">
        <button type="button" aria-label="スタート" className="mr-3">
          <Svg w={19} h={19}>
            <path d="M0 0h9v9H0z" fill="#7ddcfb" />
            <path d="M10 0h9v9h-9z" fill="#4cc8f8" />
            <path d="M0 10h9v9H0z" fill="#3dbdf5" />
            <path d="M10 10h9v9h-9z" fill="#14a4f0" />
          </Svg>
        </button>
        <label className="flex h-6 w-[173px] items-center rounded-full bg-[#f3f3f3] pr-2 pl-2.5">
          <Svg w={12} h={12}>
            <circle cx="5" cy="5" r="4.200" stroke="#222" strokeWidth="1.300" />
            <path d="M8 8l3.500 3.500" stroke="#222" strokeWidth="1.500" />
          </Svg>
          <input
            aria-label="検索"
            placeholder="検索"
            className="ml-1.5 min-w-0 flex-1 bg-transparent text-[11px] placeholder:text-[#666]"
          />
          <Svg w={27} h={20}>
            <circle cx="8" cy="8" r="4" fill="#f4a261" />
            <circle cx="15" cy="6" r="4" fill="#f7b267" />
            <circle cx="11" cy="12" r="5" fill="#f08a5d" />
            <circle cx="17" cy="12" r="4" fill="#f3934f" />
            <path d="M2 2l5 4M1 6l6 1M20 13l6-2M19 15l6 3M3 15l4-2" stroke="#7fa869" strokeWidth="1.800" />
            <path d="M9 10l2 2 2-3M14 12l3-1M12 5l2 2" stroke="#e0674f" />
            <circle cx="7" cy="14" r="1.800" fill="#f6c177" />
            <circle cx="21" cy="15" r="1.600" fill="#f0a35d" />
          </Svg>
        </label>
        <div className="ml-0.5 flex">
          {apps.map((app) => (
            <button
              key={app.name}
              type="button"
              aria-label={app.name}
              className="relative flex h-8 w-[35px] items-center justify-center"
            >
              <span className={`flex size-8 items-center justify-center rounded-sm ${app.tile || ""}`}>{app.icon}</span>
              {app.mark && <span className={`absolute bottom-0 h-0.5 rounded-full ${app.mark}`} />}
            </button>
          ))}
        </div>
      </div>
      <div className="flex flex-1 items-center justify-end">
        <button type="button" aria-label="隠れているインジケーター" className="mr-3.5">
          <Svg w={10} h={6}>
            <path d="M1 5l4-3.800L9 5" stroke="#fff" strokeWidth="1.200" />
          </Svg>
        </button>
        <button type="button" aria-label="OneDrive" className="mr-3">
          <Svg w={15} h={13}>
            <path d="M3 9.500a3 3 0 010-6A4.500 4.500 0 0111 4a3 3 0 011.500 5.500z" fill="#a9a9a9" />
            <circle cx="10" cy="8.500" r="4" fill="#d8ecfa" />
            <path d="M8 8.500a2 2 0 014-.5M12 9a2 2 0 01-4 0" stroke="#1b74c5" />
          </Svg>
        </button>
        <button type="button" aria-label="入力モード" className="mr-3.5 text-[16px] leading-4 font-light">
          A
        </button>
        <button type="button" aria-label="ネットワークとサウンド" className="mr-3 flex items-center gap-1.5">
          <Svg w={13} h={11}>
            <path d="M1 4.200c3.200-3.400 7.800-3.400 11 0M2.800 6c2.200-2.300 5.200-2.300 7.400 0M4.500 7.800c1.200-1.200 2.800-1.200 4 0" stroke="#fff" />
            <circle cx="6.500" cy="9.500" r="1" fill="#fff" />
          </Svg>
          <Svg w={13} h={11}>
            <path d="M1 3.800h2L5.500 1.300v8.400L3 7.200H1zM7.200 4c.8.800.8 2.200 0 3M9 2.500c1.800 1.700 1.800 4.300 0 6M10.700 1c2.600 2.600 2.600 6.400 0 9" stroke="#fff" />
          </Svg>
          <Svg w={13} h={11}>
            <path d="M4.500 1.500H10c.6 0 1 .4 1 1v6c0 .6-.4 1-1 1H2.500c-.6 0-1-.4-1-1V6M11.500 4.500h1v2h-1M2.800.5L1.500 3.500H4L2.500 6" stroke="#fff" />
            <path d="M5 3.500h2.500v4H3.500z" fill="#fff" />
          </Svg>
        </button>
        <button type="button" className="flex flex-col items-end leading-[13px]">
          <span>16:46</span>
          <span>2024/05/12</span>
        </button>
        <button type="button" aria-label="通知" className="mr-4 ml-1.5">
          <Svg w={12} h={14}>
            <path d="M6 1a4 4 0 014 4v3l1.500 2.500H.5L2 8V5a4 4 0 014-4zM4.300 11.300h3.400a1.700 1.700 0 01-3.400 0z" fill="#8fe3ff" />
          </Svg>
        </button>
      </div>
    </footer>
  );
}

export default function App() {
  return (
    <div className={`flex h-screen flex-col overflow-hidden bg-[#e6e6e6] ${uiFont}`}>
      <header className="relative shrink-0 bg-[#217346]">
        <HeaderArt />
        <TitleBar />
        <Tabs />
      </header>
      <Ribbon />
      <FormulaBar />
      <main className="flex min-h-0 flex-1">
        <Sheet />
        <VerticalScroll />
      </main>
      <SheetTabs />
      <StatusBar />
      <Taskbar />
    </div>
  );
}
